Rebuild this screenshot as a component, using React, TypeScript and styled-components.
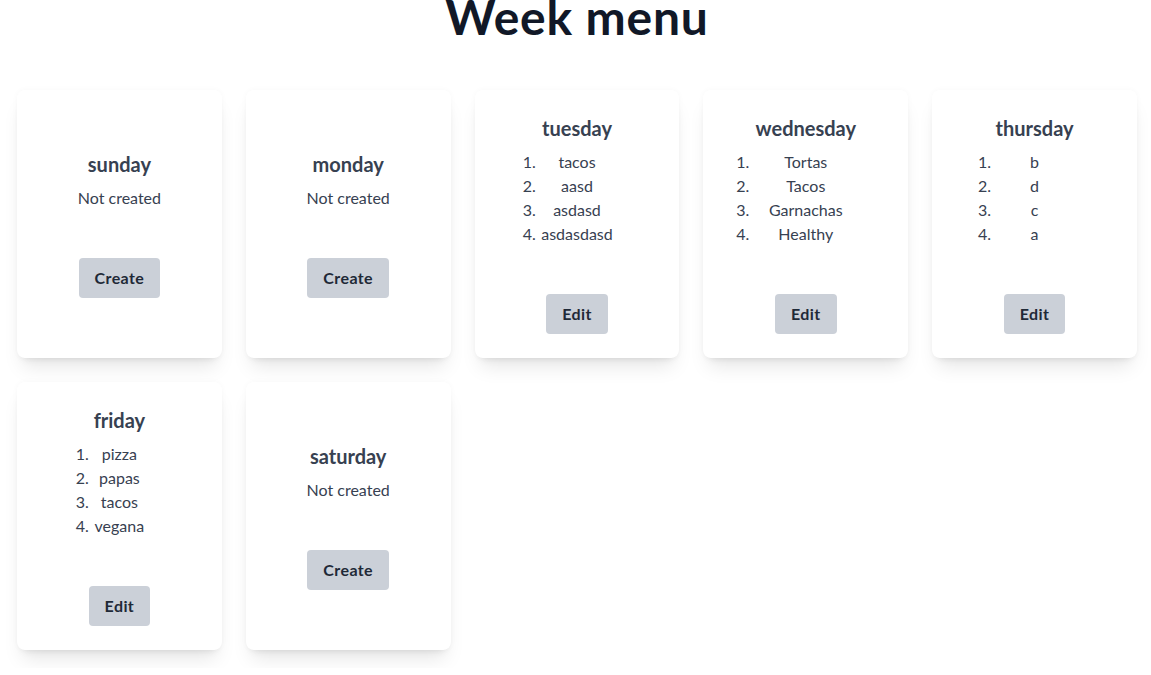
import styled, { createGlobalStyle } from 'styled-components';

const GlobalStyle = createGlobalStyle`
  html, body {
    margin: 0;
    padding: 0;
    background: #ffffff;
  }
  body {
    font-family: Lato, "Liberation Sans", sans-serif;
    color: #374151;
    overflow: hidden;
  }
`;

const Page = styled.div`
  width: 1151px;
  height: 675px;
  box-sizing: border-box;
  padding: 0 14px 0 17px;
`;

const Title = styled.h1`
  margin: -7px 0 0;
  font-size: 48px;
  line-height: 48px;
  font-weight: 700;
  color: #111827;
  text-align: center;
  letter-spacing: 0.8px;
`;

const Grid = styled.div`
  margin-top: 49px;
  display: grid;
  grid-template-columns: repeat(5, 1fr);
  column-gap: 24px;
  row-gap: 24px;
`;

const Card = styled.div`
  background: #ffffff;
  border-radius: 8px;
  box-shadow: 0 0 6px rgba(0, 0, 0, 0.03), 0 14px 20px -6px rgba(0, 0, 0, 0.1),
    0 6px 8px -6px rgba(0, 0, 0, 0.1);
  padding: 24px;
  display: flex;
  flex-direction: column;
  align-items: center;
  justify-content: center;
  min-height: 220px;
`;

const DayName = styled.h2`
  margin: 0;
  font-size: 20px;
  line-height: 28px;
  font-weight: 700;
  color: #374151;
`;

const Status = styled.p`
  margin: 8px 0 0;
  font-size: 16px;
  line-height: 24px;
`;

const Menu = styled.ol<{ $width: number }>`
  margin: 8px 0 0;
  padding: 0;
  width: ${p => p.$width}px;
  list-style: decimal outside;
  text-align: center;
  font-size: 16px;
  line-height: 24px;
`;

const Dish = styled.li`
  white-space: nowrap;
`;

const Action = styled.button`
  margin-top: 48px;
  border: none;
  border-radius: 4px;
  background: #cbd0d8;
  color: #1f2937;
  font-family: inherit;
  font-size: 16px;
  line-height: 24px;
  font-weight: 700;
  letter-spacing: 0.4px;
  padding: 8px 16px;
  cursor: pointer;
`;

type Day = { name: string; dishes?: string[]; listWidth?: number };

const days: Day[] = [
  { name: 'sunday' },
  { name: 'monday' },
  { name: 'tuesday', dishes: ['tacos', 'aasd', 'asdasd', 'asdasdasd'], listWidth: 74 },
  { name: 'wednesday', dishes: ['Tortas', 'Tacos', 'Garnachas', 'Healthy'], listWidth: 105 },
  { name: 'thursday', dishes: ['b', 'd', 'c', 'a'], listWidth: 79 },
  { name: 'friday', dishes: ['pizza', 'papas', 'tacos', 'vegana'], listWidth: 53 },
  { name: 'saturday' },
];

export default function App() {
  return (
    <>
      <GlobalStyle />
      <Page>
        <Title>Week menu</Title>
        <Grid>
          {days.map(day => (
            <Card key={day.name}>
              <DayName>{day.name}</DayName>
              {day.dishes ? (
                <Menu $width={day.listWidth ?? 80}>
                  {day.dishes.map((d, i) => (
                    <Dish key={i}>{d}</Dish>
                  ))}
                </Menu>
              ) : (
                <Status>Not created</Status>
              )}
              <Action>{day.dishes ? 'Edit' : 'Create'}</Action>
            </Card>
          ))}
        </Grid>
      </Page>
    </>
  );
}
